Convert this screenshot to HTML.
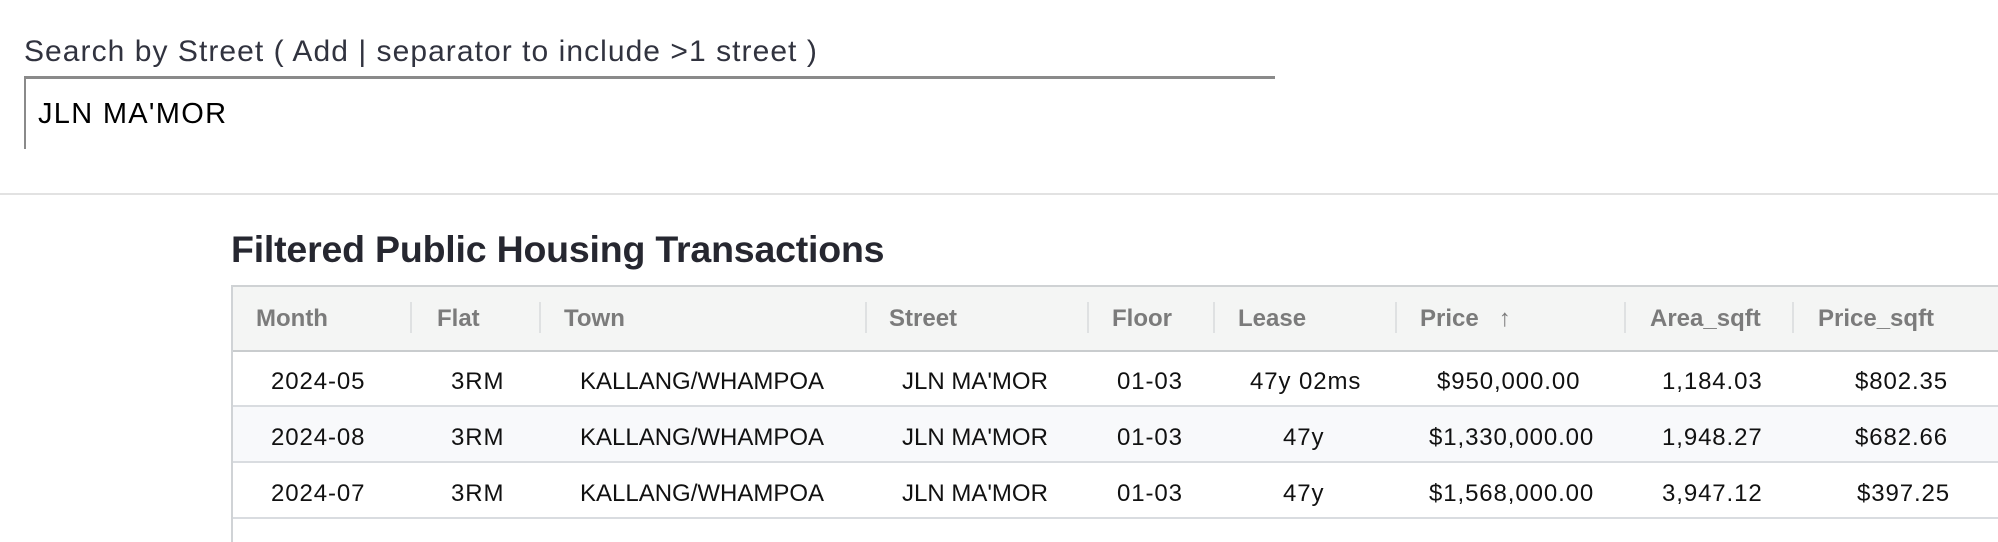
<!DOCTYPE html>
<html><head><meta charset="utf-8"><style>
body{margin:0;width:1998px;height:542px;background:#fff;position:relative;overflow:hidden;font-family:"Liberation Sans",Arial,sans-serif;}
.a{position:absolute;white-space:nowrap;}
.lbl{left:24px;top:35px;font-size:30px;letter-spacing:1.05px;color:#31333f;}
.inp{left:24px;top:76px;width:1251px;height:73px;border-top:3px solid #8a8a8a;border-left:2px solid #8a8a8a;box-sizing:border-box;background:#fff;}
.inpt{left:38px;top:98px;font-size:29px;letter-spacing:1.3px;color:#000;}
.hr{left:0;top:193px;width:1998px;height:2px;background:#e2e2e2;}
.h{left:231px;top:228px;font-size:37.5px;font-weight:bold;color:#262730;letter-spacing:-0.2px;}
.tbl{left:231px;top:285px;width:1767px;height:257px;border-left:2px solid #d0d3d6;border-top:2px solid #cfd2d4;box-sizing:border-box;}
.hd{left:233px;top:287px;width:1765px;height:63px;background:#f4f5f4;border-bottom:2px solid #c9ccce;}
.r2{left:233px;top:407px;width:1765px;height:55px;background:#f8f9fb;}
.ln{left:233px;width:1765px;height:2px;background:#d9dce0;}
.sep{top:302px;width:2px;height:31px;background:#dfe1e2;}
.th{top:305px;font-size:24px;font-weight:bold;color:#7b7b7b;}
.td{font-size:24px;color:#111;letter-spacing:0.9px;}
.tx{letter-spacing:0;}
</style></head><body>
<div class="a lbl">Search by Street ( Add | separator to include &gt;1 street )</div>
<div class="a inp"></div>
<div class="a inpt">JLN MA'MOR</div>
<div class="a hr"></div>
<div class="a h">Filtered Public Housing Transactions</div>
<div class="a tbl"></div>
<div class="a hd"></div>
<div class="a r2"></div>
<div class="a ln" style="top:405px"></div>
<div class="a ln" style="top:461px"></div>
<div class="a ln" style="top:517px"></div>

<div class="a sep" style="left:410px"></div>
<div class="a sep" style="left:539px"></div>
<div class="a sep" style="left:865px"></div>
<div class="a sep" style="left:1087px"></div>
<div class="a sep" style="left:1213px"></div>
<div class="a sep" style="left:1395px"></div>
<div class="a sep" style="left:1624px"></div>
<div class="a sep" style="left:1792px"></div>

<div class="a th" style="left:256px">Month</div>
<div class="a th" style="left:437px">Flat</div>
<div class="a th" style="left:564px">Town</div>
<div class="a th" style="left:889px">Street</div>
<div class="a th" style="left:1112px">Floor</div>
<div class="a th" style="left:1238px">Lease</div>
<div class="a th" style="left:1420px">Price &nbsp;&nbsp;↑</div>
<div class="a th" style="left:1650px">Area_sqft</div>
<div class="a th" style="left:1818px">Price_sqft</div>

<div class="a td" style="left:271px;top:368px">2024-05</div>
<div class="a td" style="left:451px;top:368px">3RM</div>
<div class="a td tx" style="left:580px;top:368px">KALLANG/WHAMPOA</div>
<div class="a td tx" style="left:902px;top:368px">JLN MA'MOR</div>
<div class="a td" style="left:1117px;top:368px">01-03</div>
<div class="a td" style="left:1250px;top:368px">47y 02ms</div>
<div class="a td" style="left:1437px;top:368px">$950,000.00</div>
<div class="a td" style="left:1662px;top:368px">1,184.03</div>
<div class="a td" style="left:1855px;top:368px">$802.35</div>

<div class="a td" style="left:271px;top:424px">2024-08</div>
<div class="a td" style="left:451px;top:424px">3RM</div>
<div class="a td tx" style="left:580px;top:424px">KALLANG/WHAMPOA</div>
<div class="a td tx" style="left:902px;top:424px">JLN MA'MOR</div>
<div class="a td" style="left:1117px;top:424px">01-03</div>
<div class="a td" style="left:1283px;top:424px">47y</div>
<div class="a td" style="left:1429px;top:424px">$1,330,000.00</div>
<div class="a td" style="left:1662px;top:424px">1,948.27</div>
<div class="a td" style="left:1855px;top:424px">$682.66</div>

<div class="a td" style="left:271px;top:480px">2024-07</div>
<div class="a td" style="left:451px;top:480px">3RM</div>
<div class="a td tx" style="left:580px;top:480px">KALLANG/WHAMPOA</div>
<div class="a td tx" style="left:902px;top:480px">JLN MA'MOR</div>
<div class="a td" style="left:1117px;top:480px">01-03</div>
<div class="a td" style="left:1283px;top:480px">47y</div>
<div class="a td" style="left:1429px;top:480px">$1,568,000.00</div>
<div class="a td" style="left:1662px;top:480px">3,947.12</div>
<div class="a td" style="left:1857px;top:480px">$397.25</div>
</body></html>
